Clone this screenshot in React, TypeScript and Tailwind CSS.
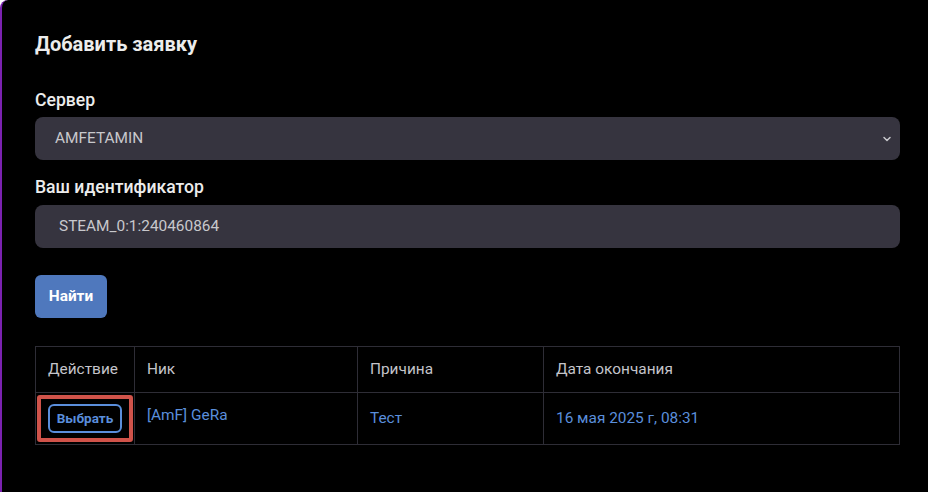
import { ChevronDown } from "lucide-react";

const rows = [
  {
    nick: "[AmF] GeRa",
    reason: "Тест",
    date: "16 мая 2025 г, 08:31",
  },
];

function App() {
  return (
    <div
      className="min-h-[492px] w-full bg-black border-l-2 border-[#7b22b0] rounded-tl-lg pl-[33px] pr-[28px] pt-[30px]"
      style={{ fontFamily: "Roboto, 'Noto Sans', sans-serif" }}
    >
      <h2 className="text-[20px] leading-7 font-bold text-[#ececec]">Добавить заявку</h2>

      <div className="mt-[29px]">
        <label className="block text-[17.6px] leading-[26px] font-medium text-[#ececec]">Сервер</label>
        <div className="relative mt-[4px]">
          <div className="h-[43px] w-full rounded-lg bg-[#36343f] flex items-center pl-[20px] text-[15.4px] text-[#c8c8cc]">
            AMFETAMIN
          </div>
          <ChevronDown
            className="absolute right-[7px] top-[16px] text-[#c8c8cc]"
            size={12}
            strokeWidth={3}
          />
        </div>
      </div>

      <div className="mt-[14px]">
        <label className="block text-[17.6px] leading-[26px] font-medium text-[#ececec]">Ваш идентификатор</label>
        <div className="mt-[5px] h-[43px] w-full rounded-lg bg-[#36343f] flex items-center pl-[24px] text-[15.4px] text-[#c8c8cc]">
          STEAM_0:1:240460864
        </div>
      </div>

      <button
        type="button"
        className="mt-[27px] h-[43px] w-[72px] rounded-md bg-[#4f78bd] text-[15.4px] font-bold text-white"
      >
        Найти
      </button>

      <table className="mt-[28px] w-full border-collapse text-[15.4px]">
        <thead>
          <tr className="h-[46px] text-[#c4c4ca] text-left">
            <th className="w-[99px] border border-[#2e2d36] px-[12px] font-normal">Действие</th>
            <th className="w-[223px] border border-[#2e2d36] px-[12px] font-normal">Ник</th>
            <th className="w-[186px] border border-[#2e2d36] px-[12px] font-normal">Причина</th>
            <th className="border border-[#2e2d36] px-[12px] font-normal">Дата окончания</th>
          </tr>
        </thead>
        <tbody>
          {rows.map((r) => (
            <tr key={r.nick} className="h-[52px] text-[#5a8edb]">
              <td className="border border-[#2e2d36] p-[1px]">
                <div className="h-[47px] rounded-[3px] border-4 border-[#d0534a] flex items-center justify-center">
                  <button
                    type="button"
                    className="h-[29px] px-[7px] rounded-md border-2 border-[#5a8edb] text-[13.5px] font-bold text-[#5a8edb]"
                  >
                    Выбрать
                  </button>
                </div>
              </td>
              <td className="border border-[#2e2d36] px-[12px] align-top pt-[11px]">{r.nick}</td>
              <td className="border border-[#2e2d36] px-[12px]">{r.reason}</td>
              <td className="border border-[#2e2d36] px-[12px]">{r.date}</td>
            </tr>
          ))}
        </tbody>
      </table>
    </div>
  );
}

export default App;
